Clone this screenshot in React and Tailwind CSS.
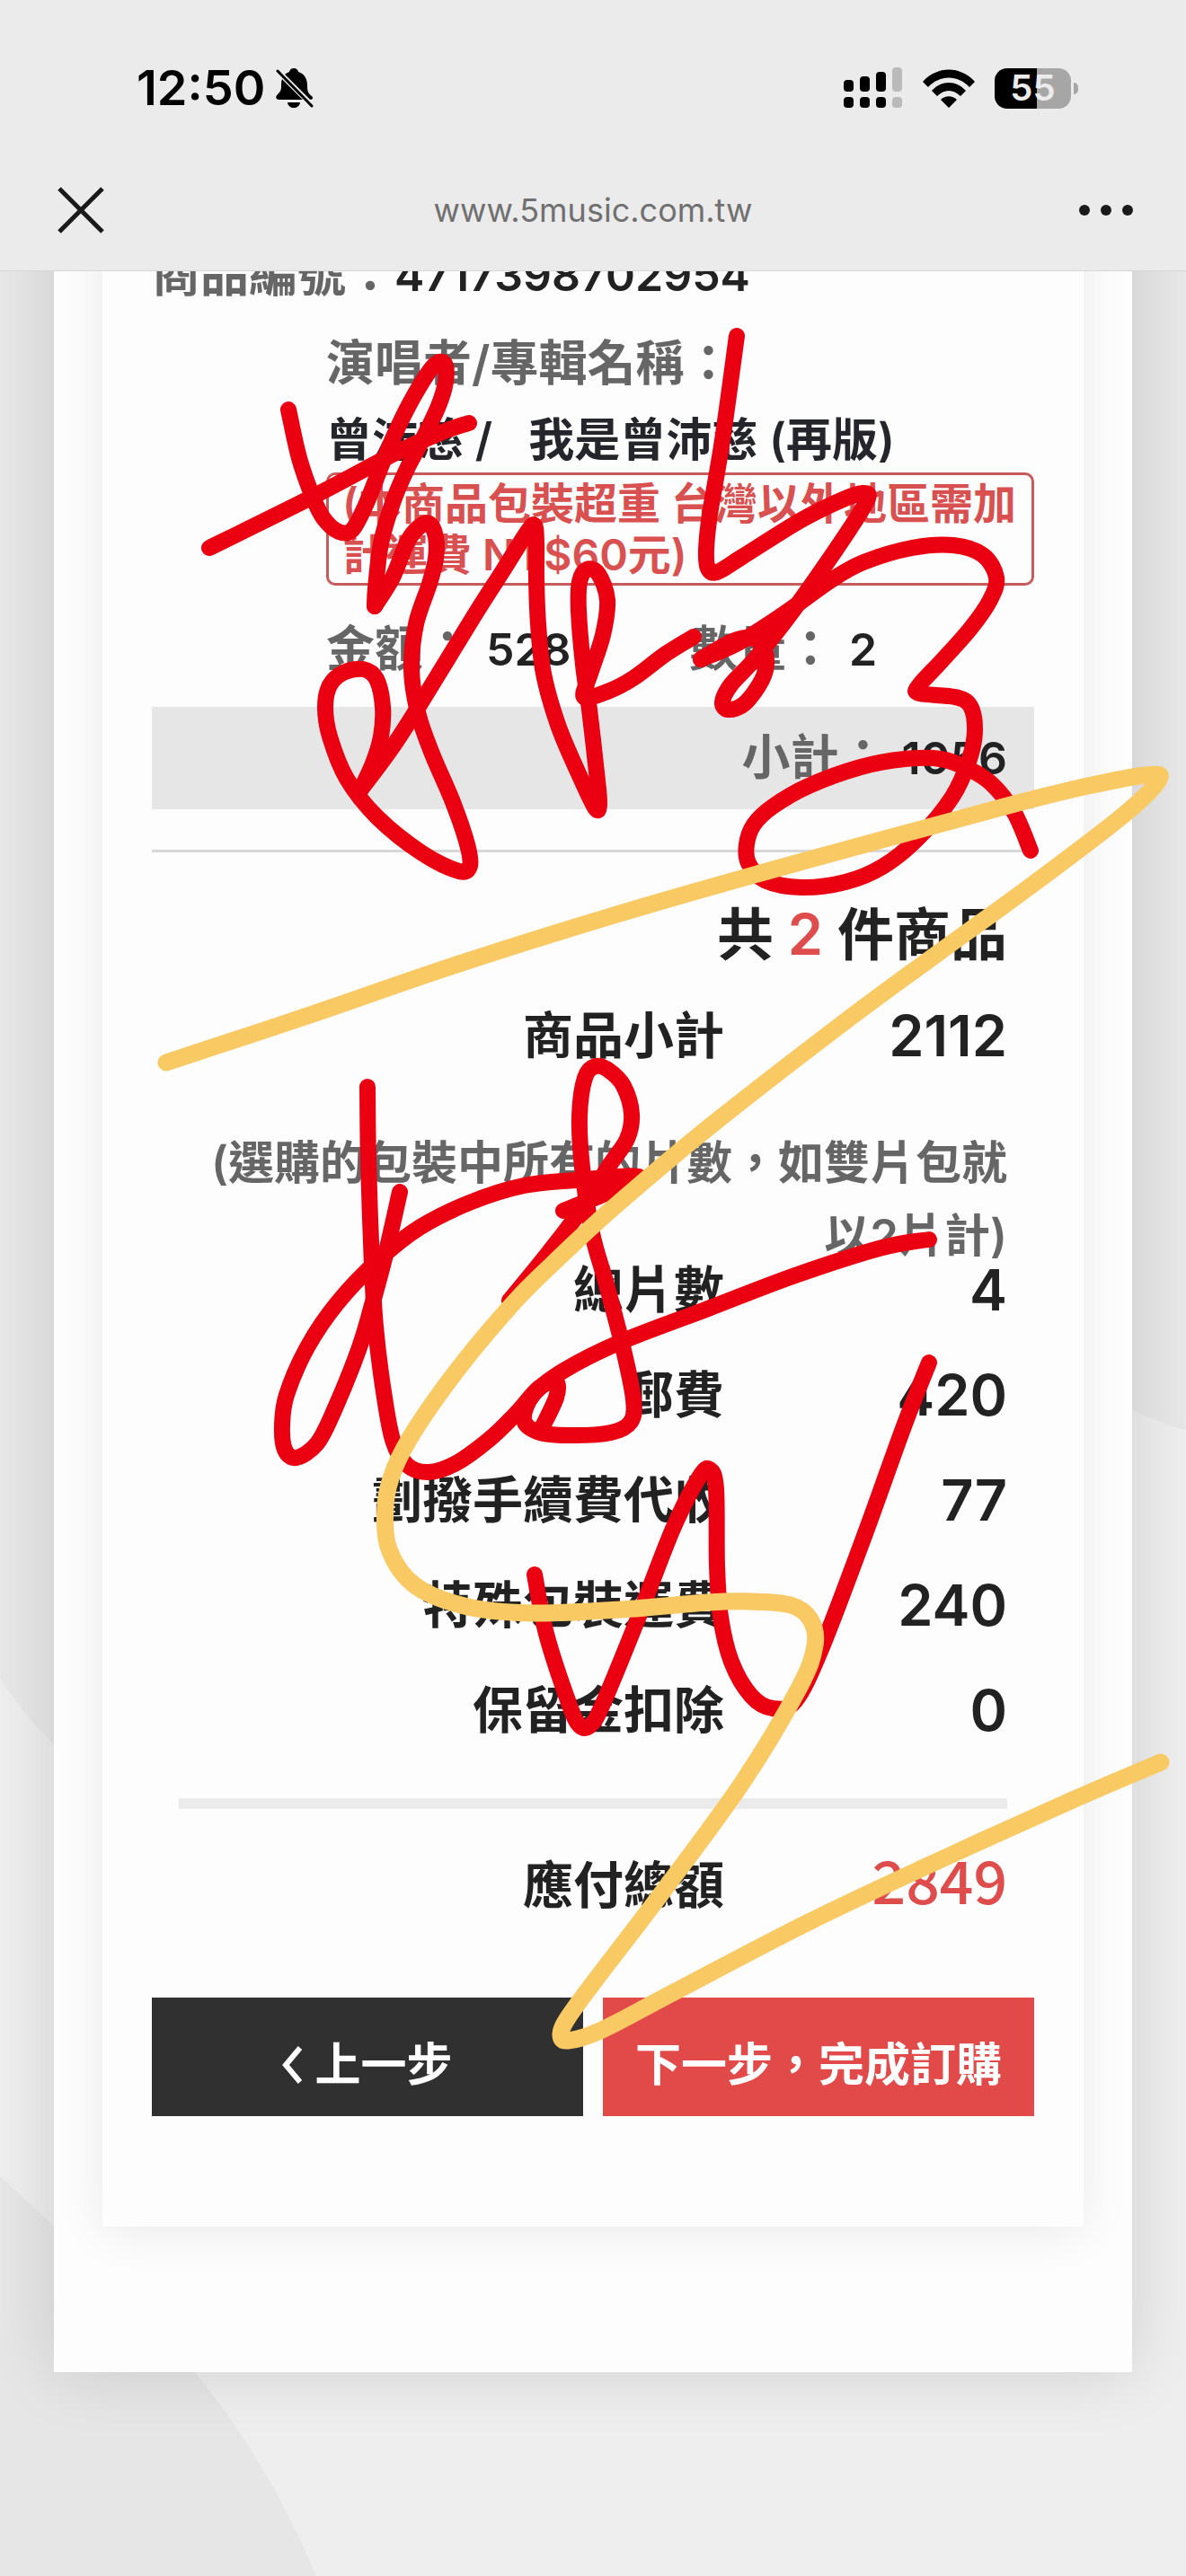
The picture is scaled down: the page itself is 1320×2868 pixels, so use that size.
const RED_STROKES = [
    [[321, 456], [333, 510], [348, 553], [360, 577], [377, 592], [392, 590], [408, 560], [427, 512], [447, 467], [467, 430], [484, 406], [495, 405], [496, 425], [488, 452], [470, 490], [453, 522], [437, 560], [424, 605], [418, 655], [417, 675]],
    [[417, 675], [437, 643], [453, 604], [466, 587], [478, 583], [485, 598], [485, 622], [478, 650], [463, 695], [458, 745], [465, 793], [480, 837], [504, 893], [520, 940], [523, 964], [511, 970], [470, 950], [420, 910], [386, 867], [367, 820], [362, 787], [367, 763], [382, 749], [404, 745], [419, 756], [426, 787], [424, 820], [415, 850], [401, 880]],
    [[401, 880], [436, 833], [470, 780], [525, 690], [560, 635], [587, 592], [595, 585], [597, 605], [597, 645], [599, 695], [605, 750], [621, 807], [642, 857], [662, 899], [667, 895], [664, 860], [656, 790], [649, 740], [644, 680], [645, 648], [653, 634], [666, 639], [676, 668], [671, 707], [657, 750], [650, 776], [676, 770], [705, 755], [741, 728], [772, 709]],
    [[233, 610], [350, 552], [443, 503], [495, 480], [522, 471]],
    [[820, 374], [804, 490], [790, 573], [786, 612], [788, 633], [798, 637], [826, 620], [890, 580], [936, 557], [960, 549], [966, 555], [947, 587], [904, 650], [872, 694], [839, 735], [813, 763], [804, 782], [811, 790], [829, 783], [848, 757], [853, 735], [845, 714], [820, 712], [780, 734]],
    [[780, 734], [823, 715], [876, 681], [925, 646], [961, 626], [1015, 610], [1061, 607], [1094, 618], [1109, 643], [1102, 668], [1080, 700], [1047, 737], [1023, 763], [1023, 772], [1063, 776], [1080, 786], [1085, 813], [1079, 845], [1060, 887], [1023, 932], [982, 965], [941, 982], [892, 988], [851, 980], [833, 961], [831, 940], [839, 918], [860, 898], [900, 875], [958, 854], [1007, 845], [1047, 845], [1078, 856], [1104, 873], [1129, 905], [1147, 947]],
    [[409, 1210], [410, 1293], [414, 1410], [418, 1477], [426, 1543], [437, 1603], [453, 1631], [476, 1639], [506, 1630], [544, 1603], [575, 1573], [600, 1545], [619, 1539], [619, 1556], [604, 1588]],
    [[445, 1327], [430, 1393], [414, 1453], [399, 1503], [372, 1570], [353, 1607], [330, 1623], [317, 1614], [314, 1587], [319, 1553], [342, 1500], [376, 1450], [422, 1402], [468, 1366], [525, 1338], [583, 1320], [640, 1314], [711, 1310], [671, 1330], [627, 1348]],
    [[567, 1448], [611, 1394], [646, 1348], [678, 1298], [698, 1268], [703, 1240], [694, 1209], [678, 1192], [663, 1187], [651, 1200], [645, 1243], [648, 1300], [659, 1373], [675, 1430], [694, 1503], [705, 1558], [702, 1583], [680, 1595], [632, 1598], [598, 1594], [583, 1580], [594, 1552], [629, 1525], [691, 1494], [788, 1457], [885, 1420], [982, 1389], [1034, 1380]],
    [[595, 1753], [608, 1819], [633, 1896], [645, 1921], [657, 1921], [671, 1897], [710, 1802], [749, 1702], [778, 1645], [790, 1636], [797, 1658], [798, 1743], [802, 1800], [814, 1850], [836, 1888], [860, 1902], [885, 1894], [914, 1836], [962, 1710], [1006, 1588], [1034, 1517]],
];

const YELLOW_STROKE = [[185, 1183], [345, 1130], [505, 1075], [680, 1020], [843, 973], [1007, 928], [1129, 895], [1211, 875], [1275, 863], [1290, 868], [1251, 907], [1149, 985], [1047, 1059], [937, 1140], [789, 1255], [682, 1345], [614, 1408], [572, 1450], [513, 1520], [463, 1590], [439, 1635], [429, 1675], [433, 1725], [463, 1766], [521, 1789], [594, 1796], [691, 1792], [788, 1784], [836, 1783], [880, 1787], [902, 1803], [907, 1832], [889, 1880], [826, 1985], [737, 2107], [663, 2204], [633, 2245], [624, 2264], [632, 2272], [670, 2260], [752, 2217], [900, 2140], [1048, 2070], [1196, 2003], [1292, 1962]];

const charges = [
    { label: '總片數', value: 4 },
    { label: '郵費', value: 420 },
    { label: '劃撥手續費代收', value: 77 },
    { label: '特殊包裝運費', value: 240 },
    { label: '保留金扣除', value: 0 },
];

// Catmull-Rom points -> cubic bezier path
const toPath = (pts) => {
    let d = `M${pts[0][0]} ${pts[0][1]}`;
    for (let i = 0; i < pts.length - 1; i++) {
        const p0 = pts[i - 1] || pts[i];
        const p1 = pts[i];
        const p2 = pts[i + 1];
        const p3 = pts[i + 2] || p2;
        d += `C${p1[0] + (p2[0] - p0[0]) / 6} ${p1[1] + (p2[1] - p0[1]) / 6} ${p2[0] - (p3[0] - p1[0]) / 6} ${p2[1] - (p3[1] - p1[1]) / 6} ${p2[0]} ${p2[1]}`;
    }
    return d;
};

function StatusBar() {
    return (
        <div className="flex items-center justify-between pt-[64px] pr-[120px] pl-[152px]">
            <div className="flex items-center gap-3 text-black">
                <span className="text-[54px] leading-[68px]">12:50</span>
                <svg viewBox="0 0 42 44" className="h-[44px] w-[42px]" fill="currentColor">
                    <path d="M20 0c3 0 4 1 5 4 7 2 10 8 10 15s1 9 5 12c2 2 1 4-2 4H4c-4 0-5-3-2-6 4-4 4-5 4-11C6 11 9 6 15 4c1-3 2-4 5-4zM13 38h14c-1 8-13 8-14 0z" />
                    <path d="M0 1l43 43" stroke="#ebebeb" strokeWidth="6" />
                    <path d="M2 3l38 39" stroke="currentColor" strokeWidth="3" strokeLinecap="round" />
                </svg>
            </div>
            <div className="flex items-center gap-[22px]">
                <svg viewBox="0 0 66 46" className="h-[46px] w-[66px]">
                    <rect x="0" y="14" width="11" height="13" rx="4" />
                    <rect x="18" y="10" width="11" height="17" rx="4" />
                    <rect x="36" y="5" width="11" height="22" rx="4" />
                    <rect x="54" y="0" width="11" height="27" rx="4" fill="#bababa" />
                    <rect x="0" y="33" width="11" height="12" rx="4" />
                    <rect x="18" y="33" width="11" height="12" rx="4" />
                    <rect x="36" y="33" width="11" height="12" rx="4" />
                    <rect x="54" y="33" width="11" height="12" rx="4" fill="#bababa" />
                </svg>
                <svg viewBox="0 0 58 43" className="h-[43px] w-[58px]">
                    <path d="M0 14C16-4 42-4 58 14l-6 6C39 6 19 6 6 20zM10 24c11-12 27-12 38 0l-6 6c-8-8-18-8-26 0zM20 34c5-5 13-5 18 0l-9 9z" />
                </svg>
                <div className="flex items-center gap-[3px]">
                    <div className="flex h-[45px] w-[85px] items-center justify-center rounded-[14px] bg-linear-to-r from-black from-55% to-[#a6a6a6] to-55% text-[40px] text-[#ebebeb]">
                        55
                    </div>
                    <div className="h-[13px] w-[5px] rounded-r-full bg-[#a6a6a6]" />
                </div>
            </div>
        </div>
    );
}

function Backdrop() {
    return (
        <svg viewBox="0 0 1320 2868" className="absolute inset-x-0 top-0 w-full" aria-hidden="true">
            <path d="M0 0H1320V1592C1290 1584 1270 1574 1240 1560H60V1942Q26 1910 0 1868Z" fill="#e7e7e7" />
            <path d="M0 2423C150 2560 270 2670 352 2868H0Z" fill="#e6e6e6" />
        </svg>
    );
}

function Scribbles() {
    return (
        <svg viewBox="0 0 1320 2868" className="pointer-events-none absolute inset-x-0 top-0 z-20 w-full" fill="none" strokeLinecap="round" strokeLinejoin="round" aria-hidden="true">
            {RED_STROKES.map((pts, i) => (
                <path key={i} d={toPath(pts)} stroke="#eb0012" strokeWidth="18" />
            ))}
            <path d={toPath(YELLOW_STROKE)} stroke="#f9c963" strokeWidth="19" />
        </svg>
    );
}

function Field({ label, children, className = '' }) {
    return (
        <p className={`flex items-center text-[50px] ${className}`}>
            <span className="text-[54px] text-[#666666]">{label}</span>
            {children}
        </p>
    );
}

function TotalRow({ label, valueClass = 'text-[63px]', children }) {
    return (
        <div className="flex items-center justify-end text-[56px] leading-[57px]">
            <dt>{label}</dt>
            <dd className={`w-[315px] text-right ${valueClass}`}>{children}</dd>
        </div>
    );
}

export default function App() {
    return (
        <div className="relative min-h-screen overflow-hidden bg-[#eeeeee] pb-[227px] font-['Inter','Noto_Sans_CJK_TC',sans-serif] font-semibold text-[#222222]">
            <Backdrop />

            {/* Browser header */}
            <header className="relative z-10 h-[302px] border-b border-[#d6d6d6] bg-[#ebebeb]">
                <StatusBar />
                <div className="mt-[70px] flex items-center justify-between px-[58px]">
                    <button type="button" aria-label="關閉" className="p-[6px]">
                        <svg viewBox="0 0 52 52" className="h-[52px] w-[52px]" stroke="#1a1a1a" strokeWidth="5">
                            <path d="M2 2l48 48M50 2L2 50" />
                        </svg>
                    </button>
                    <span className="text-[36px] leading-[50px] font-normal text-[#707070]">www.5music.com.tw</span>
                    <button type="button" aria-label="更多">
                        <svg viewBox="0 0 64 14" className="h-[14px] w-[64px]" fill="#1a1a1a">
                            <circle cx="9" cy="7" r="6" />
                            <circle cx="33" cy="7" r="6" />
                            <circle cx="57" cy="7" r="6" />
                        </svg>
                    </button>
                </div>
            </header>

            <main className="relative mx-[60px] -mt-[80px] bg-[#fdfdfd] px-[54px] pb-[162px] shadow-[0_0_70px_rgba(0,0,0,0.13)]">
                <div className="bg-[#fdfdfd] px-[55px] pt-[44px] pb-[123px] shadow-[0_6px_50px_rgba(0,0,0,0.08)]">
                    <Field label="商品編號：" className="leading-[80px]">4717398702954</Field>

                    {/* Item */}
                    <div className="mt-[23px] ml-[194px]">
                        <p className="text-[54px] leading-[72px] text-[#666666]">演唱者/專輯名稱：</p>
                        <h2 className="mt-[13px] flex gap-10 text-[51px] leading-[72px] text-[#25262c]">
                            <span>曾沛慈 /</span>
                            <span>我是曾沛慈 (再版)</span>
                        </h2>
                        <p className="rounded-[10px] border-3 border-[#c75a5a] px-[15px] py-[3px] text-[48px] leading-[57px] text-[#d95050]">
                            (本商品包裝超重 台灣以外地區需加計運費 NT$60元)
                        </p>
                        <div className="mt-[35px] flex">
                            <Field label="金額：" className="w-[404px] gap-4 leading-[72px]">528</Field>
                            <Field label="數量：" className="gap-4 leading-[72px]">2</Field>
                        </div>
                    </div>
                    <Field label="小計：" className="mt-[28px] justify-end gap-4 bg-[#e6e6e6] px-[30px] leading-[114px]">1056</Field>
                    <hr className="mt-[45px] border-t-3 border-[#d7d7d7]" />

                    {/* Totals */}
                    <div className="mt-[46px] mb-[40px] px-[30px] text-right text-[63px] leading-[90px]">
                        共 <span className="text-[#de4c4c]">2</span> 件商品
                    </div>
                    <dl className="px-[30px]">
                        <TotalRow label="商品小計">2112</TotalRow>
                        <div className="mt-[72px] -mb-2 text-right text-[51px] leading-[81px] text-[#666666]">
                            (選購的包裝中所有的片數，如雙片包就以2片計)
                        </div>
                        <div className="flex flex-col gap-[60px]">
                            {charges.map(({ label, value }) => (
                                <TotalRow key={label} label={label}>{value}</TotalRow>
                            ))}
                        </div>
                        <div className="mt-[69px] border-t-12 border-[#ebebeb] pt-[57px]">
                            <TotalRow
                                label="應付總額"
                                valueClass="self-start font-['Noto_Sans_CJK_TC',sans-serif] text-[66px] leading-[41px] font-medium text-[#de4c4c]"
                            >
                                2849
                            </TotalRow>
                        </div>
                    </dl>

                    <div className="mt-[96px] grid grid-cols-2 gap-[22px] text-[51px] leading-[114px] text-white">
                        <button type="button" className="flex items-center justify-center gap-[14px] bg-[#303030] pt-[18px]">
                            <svg viewBox="0 0 22 42" className="h-[42px] w-[22px]" fill="none" stroke="currentColor" strokeWidth="6">
                                <path d="M20 2L4 21l16 19" />
                            </svg>
                            上一步
                        </button>
                        <button type="button" className="bg-[#e24949] pt-[18px]">下一步，完成訂購</button>
                    </div>
                </div>
            </main>

            <Scribbles />
        </div>
    );
}
